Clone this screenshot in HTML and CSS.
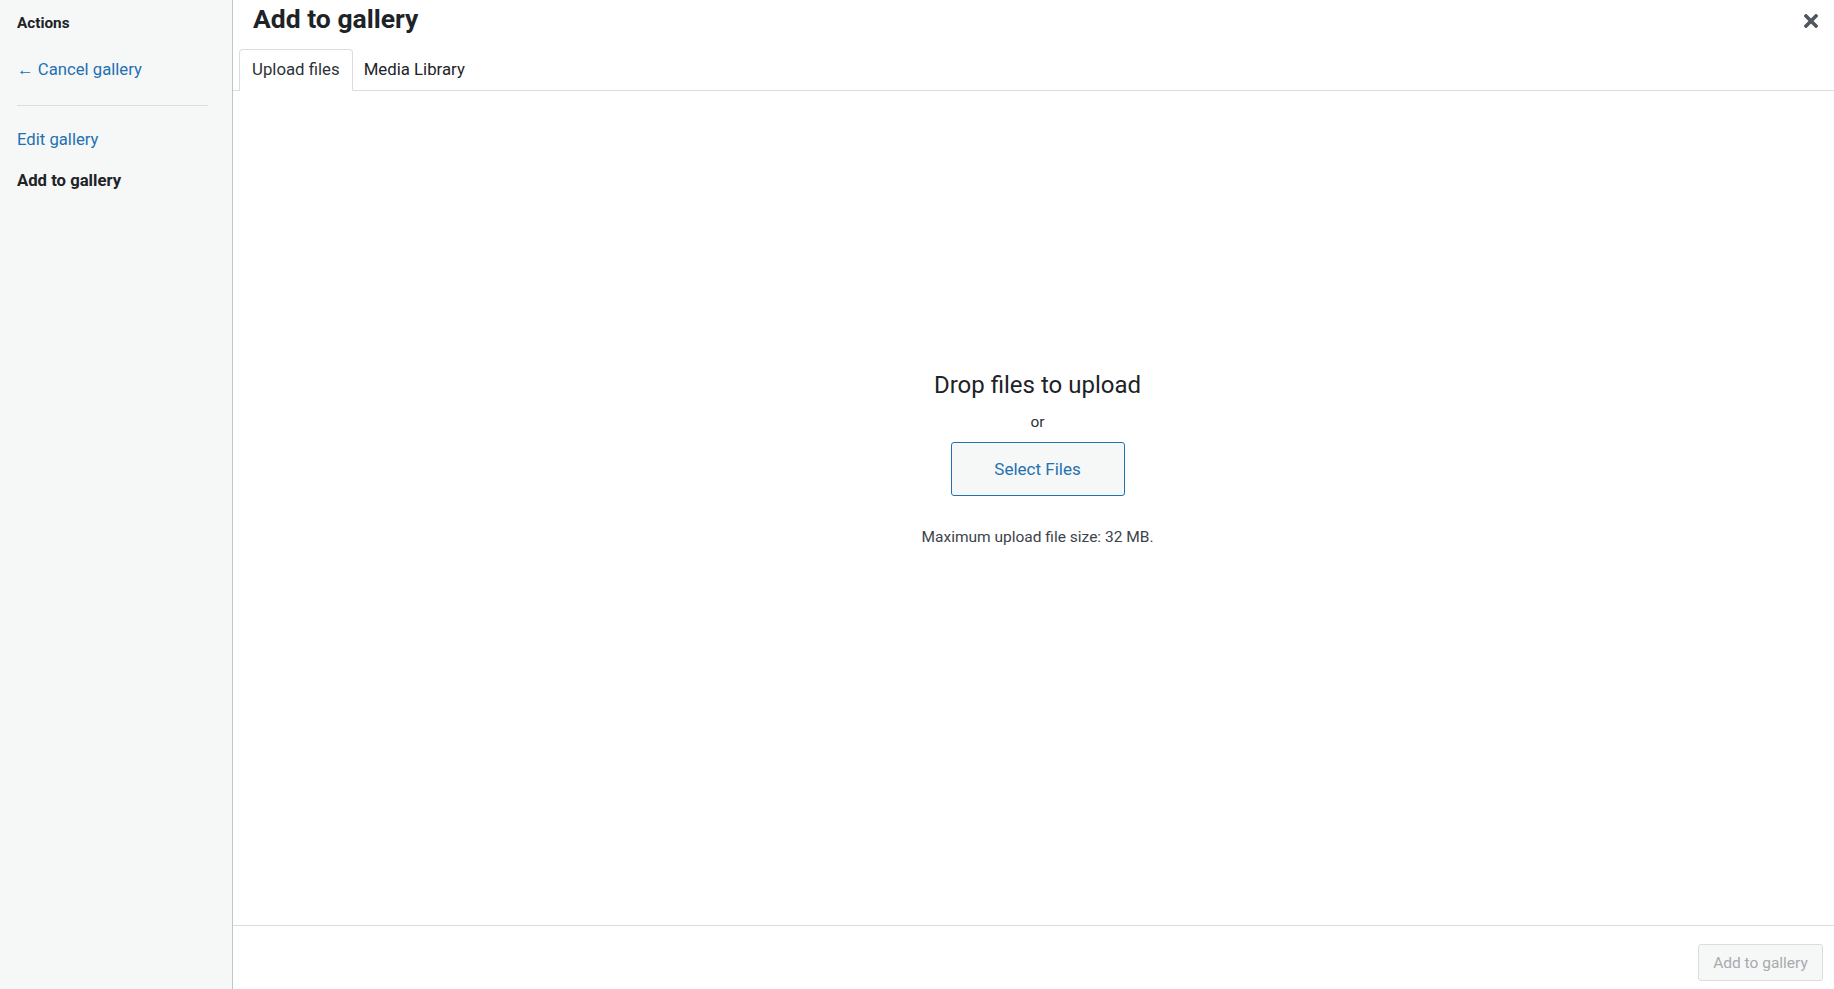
FILE: index.html
```html
<!DOCTYPE html>
<html lang="en">
<head>
  <meta charset="UTF-8">
  <title>Add to gallery</title>
  <link rel="stylesheet" href="styles.css">
</head>
<body>
  <aside class="sidebar">
    <h3 class="menu-title">Actions</h3>
    <a class="menu-link cancel" href="#">&larr; Cancel gallery</a>
    <div class="separator"></div>
    <a class="menu-link" href="#">Edit gallery</a>
    <span class="menu-link active">Add to gallery</span>
  </aside>

  <main class="frame">
    <header class="frame-header">
      <h1 class="frame-title">Add to gallery</h1>
      <button class="close-btn" aria-label="Close">
        <svg width="14" height="14" viewBox="0 0 14 14">
          <path d="M2 2 L12 12 M12 2 L2 12" stroke="#50575e" stroke-width="3.6" stroke-linecap="square"/>
        </svg>
      </button>
      <nav class="tabs">
        <a class="tab active" href="#">Upload files</a>
        <a class="tab" href="#">Media Library</a>
      </nav>
    </header>

    <section class="uploader">
      <h2 class="drop-title">Drop files to upload</h2>
      <p class="or">or</p>
      <button class="select-btn">Select Files</button>
      <p class="max-size">Maximum upload file size: 32 MB.</p>
    </section>

    <footer class="toolbar">
      <button class="primary-btn" disabled>Add to gallery</button>
    </footer>
  </main>
</body>
</html>
```

FILE: styles.css
```css
body {
  font-family: Roboto, "Liberation Sans", sans-serif;
  margin: 0;
  display: flex;
  height: 100vh;
  color: #1d2327;
  background-color: #ffffff;
  overflow: hidden;
}
.sidebar {
  width: 233px;
  flex-shrink: 0;
  background-color: #f6f7f7;
  border-right: 1px solid #c3c4c7;
  padding: 0 24px 0 17px;
  box-sizing: border-box;
  display: flex;
  flex-direction: column;
}
.menu-title {
  margin: 14px 0 0;
  font-size: 15.3px;
  font-weight: bold;
  line-height: 18px;
}
.menu-link {
  font-size: 16.7px;
  line-height: 22px;
  color: #2271b1;
  text-decoration: none;
}
.menu-link.cancel {
  margin-top: 27px;
}
.separator {
  height: 1px;
  background-color: #dcdcde;
  margin: 24px 0 23px;
}
.menu-link.active {
  color: #1d2327;
  font-weight: bold;
  margin-top: 19px;
}
.frame {
  flex-grow: 1;
  display: flex;
  flex-direction: column;
  min-width: 0;
}
.frame-header {
  position: relative;
  border-bottom: 1px solid #dcdcde;
}
.frame-title {
  margin: 0;
  padding: 0 20px;
  font-size: 26.5px;
  font-weight: bold;
  line-height: 38px;
}
.close-btn {
  position: absolute;
  top: 14px;
  right: 16px;
  padding: 0;
  border: none;
  background: none;
  cursor: pointer;
  line-height: 0;
}
.tabs {
  display: flex;
  padding: 11px 0 0 6px;
}
.tab {
  padding: 0 11px;
  height: 42px;
  line-height: 38px;
  font-size: 16.8px;
  color: #1d2327;
  text-decoration: none;
  border-top: 1px solid transparent;
  margin-bottom: -1px;
  box-sizing: border-box;
}
.tab.active {
  padding: 0 12px;
  border: 1px solid #dcdcde;
  border-bottom: none;
  border-radius: 4px 4px 0 0;
  background-color: #ffffff;
  color: #2c3338;
}
.uploader {
  flex-grow: 1;
  display: flex;
  flex-direction: column;
  align-items: center;
  padding: 276px 0 0 8px;
}
.drop-title {
  margin: 0;
  font-size: 24px;
  font-weight: normal;
  line-height: 36px;
}
.or {
  margin: 9px 0 0;
  font-size: 15.5px;
  line-height: 20px;
  color: #2c3338;
}
.select-btn {
  margin-top: 10px;
  width: 174px;
  height: 54px;
  font-family: inherit;
  font-size: 17px;
  color: #2271b1;
  background-color: #f6f7f7;
  border: 1px solid #2271b1;
  border-radius: 3px;
  cursor: pointer;
}
.max-size {
  margin: 31px 0 0;
  font-size: 15.5px;
  line-height: 20px;
  color: #3c434a;
}
.toolbar {
  height: 64px;
  border-top: 1px solid #dcdcde;
  display: flex;
  justify-content: flex-end;
  align-items: flex-start;
  padding: 18px 11px 0 0;
  box-sizing: border-box;
}
.primary-btn {
  width: 125px;
  height: 37px;
  font-family: inherit;
  font-size: 15.5px;
  color: #a7aaad;
  background-color: #f6f7f7;
  border: 1px solid #dcdcde;
  border-radius: 3px;
}
```
